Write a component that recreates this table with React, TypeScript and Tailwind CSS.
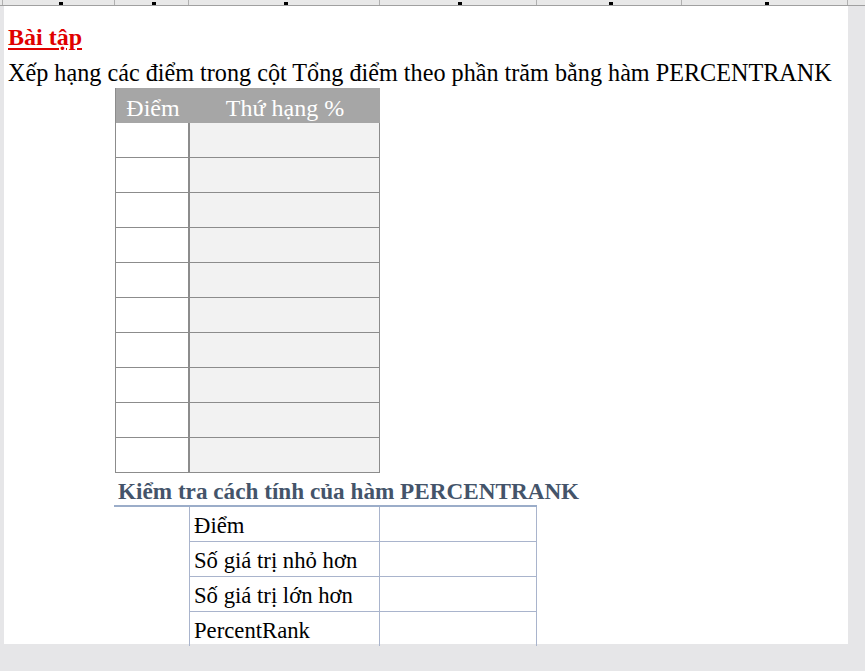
const rows = Array.from({ length: 10 });

const checkRows = ["Điểm", "Số giá trị nhỏ hơn", "Số giá trị lớn hơn", "PercentRank"];

// widths of the cut-off column strip at the very top
const topCols = [
  { w: 3, mark: false },
  { w: 112, mark: true },
  { w: 74, mark: true },
  { w: 191, mark: true },
  { w: 157, mark: true },
  { w: 145, mark: true },
  { w: 166, mark: true },
];

export default function App() {
  return (
    <div
      className="w-[865px] h-[671px] bg-[#e6e6e8] overflow-hidden flex flex-col"
      style={{ fontFamily: '"Liberation Serif", "Times New Roman", serif' }}
    >
      {/* strip of the row above, cut off */}
      <div className="flex h-[6px] border-b border-[#a0a0a0] bg-[#e8e8e8] shrink-0">
        {topCols.map((c, i) => (
          <div
            key={i}
            className="relative border-r border-[#b0b0b0] h-full"
            style={{ width: c.w }}
          >
            {c.mark && (
              <span className="absolute bottom-0 left-1/2 w-[4px] h-[3px] bg-black" />
            )}
          </div>
        ))}
      </div>

      <div className="flex">
        <div className="w-[4px] shrink-0" />
        <div className="w-[844px] h-[638px] bg-white shrink-0 text-black">
          <div className="pl-[4px] pt-[16px] h-[46px] leading-[30px] text-[24px] font-bold text-[#e00000] underline decoration-2 underline-offset-[3px]">
            Bài tập
          </div>
          <div className="pl-[4px] pt-[3px] h-[36px] leading-[36px] text-[24.2px] whitespace-nowrap">
            Xếp hạng các điểm trong cột Tổng điểm theo phần trăm bằng hàm PERCENTRANK
          </div>

          {/* table 1 */}
          <div className="ml-[111px] w-[265px] border-l border-[#8c8c8c]">
            <div className="flex h-[35px] bg-[#a6a6a6] text-white text-[24px] leading-[40px]">
              <div className="w-[74px] text-center">Điểm</div>
              <div className="flex-1 text-center">Thứ hạng %</div>
            </div>
            {rows.map((_, i) => (
              <div key={i} className="flex h-[35px] border-b border-[#8c8c8c]">
                <div className="w-[74px] bg-white border-r-2 border-[#8c8c8c]" />
                <div className="flex-1 bg-[#f2f2f2] border-r border-[#8c8c8c]" />
              </div>
            ))}
          </div>

          {/* heading */}
          <div className="ml-[110px] w-[423px] h-[34px] border-b-2 border-[#9badc9] pl-[4px] pt-[4px] text-[23.2px] leading-[28px] font-bold text-[#44546a] whitespace-nowrap">
            Kiểm tra cách tính của hàm PERCENTRANK
          </div>

          {/* table 2 */}
          <div className="ml-[185px] w-[348px] border-l border-r border-[#a9b4cc]">
            {checkRows.map((t, i) => (
              <div
                key={t}
                className={`flex ${i === 3 ? "h-[34px]" : "h-[35px] border-b"} border-[#a9b4cc]`}
              >
                <div className="w-[190px] border-r border-[#a9b4cc] pl-[4px] text-[22.7px] leading-[38px] whitespace-nowrap">
                  {t}
                </div>
                <div className="flex-1" />
              </div>
            ))}
          </div>
        </div>
      </div>
    </div>
  );
}
